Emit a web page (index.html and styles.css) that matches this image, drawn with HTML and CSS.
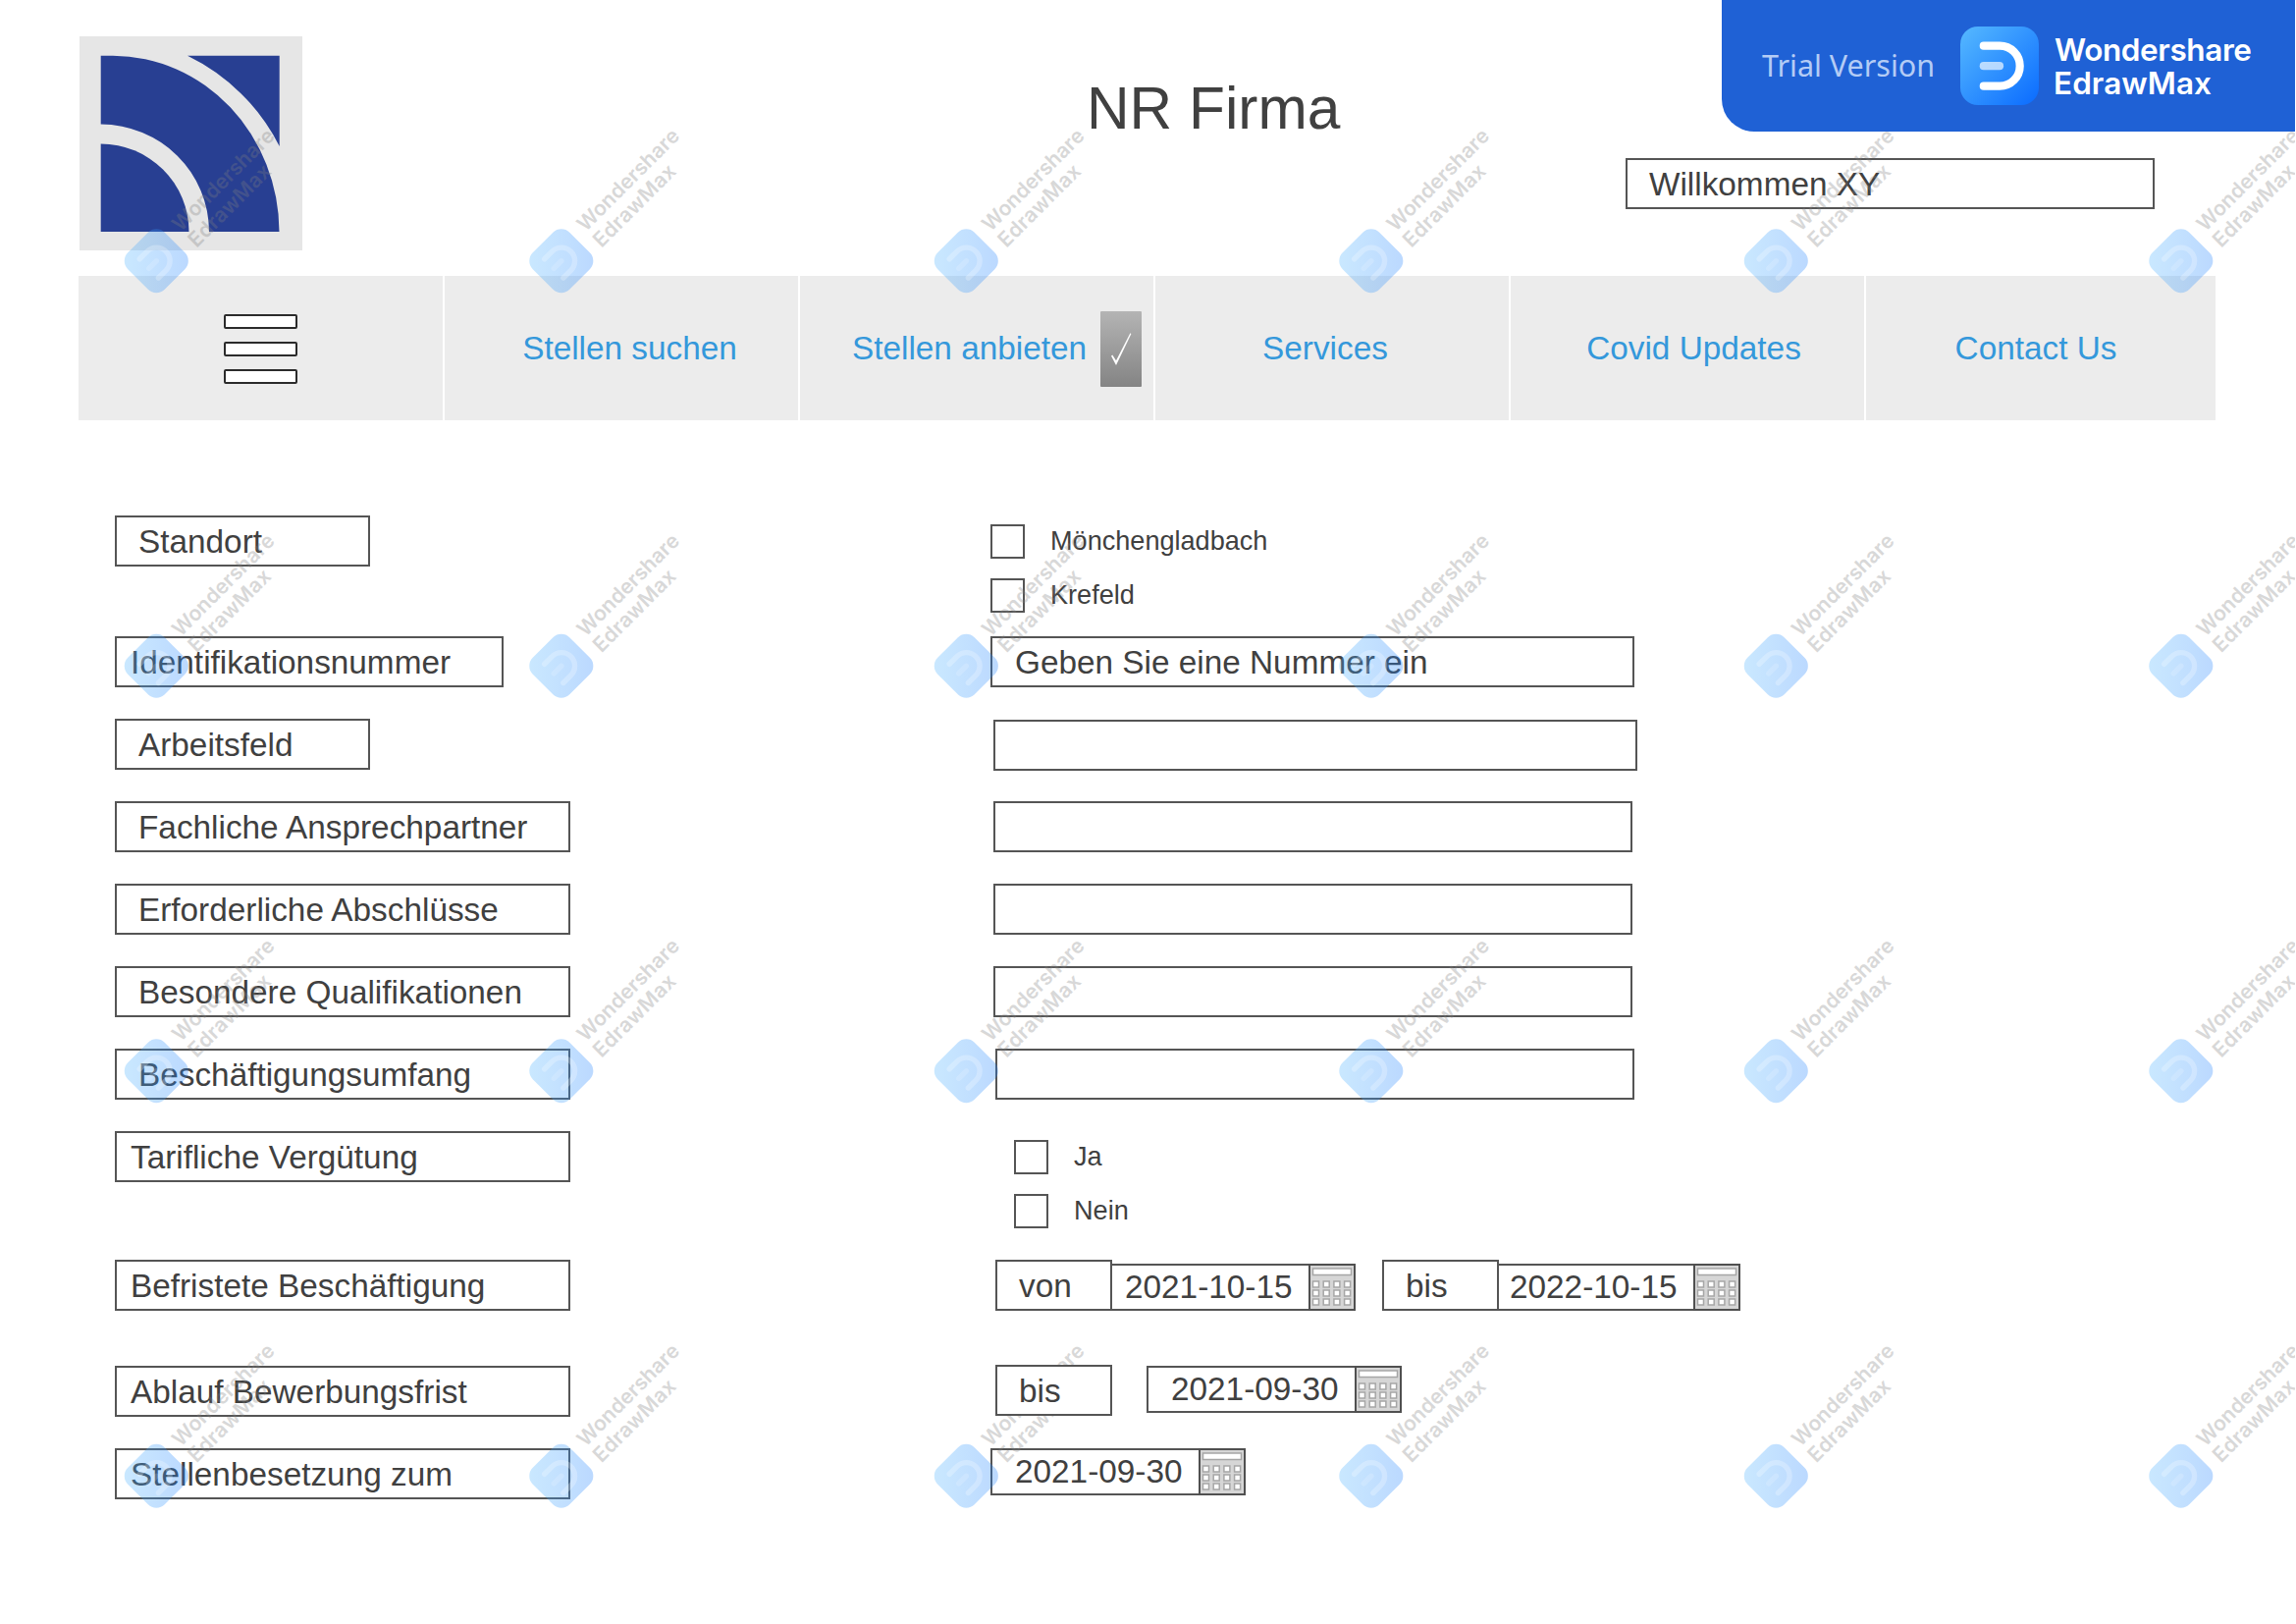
FILE: index.html
```
<!DOCTYPE html>
<html lang="de">
<head>
<meta charset="utf-8">
<title>NR Firma</title>
<link rel="stylesheet" href="styles.css">
</head>
<body>
<header class="header">
  <svg class="logo" viewBox="0 0 227 218">
    <rect width="227" height="218" fill="#e6e6e6"/>
    <g fill="#283f92">
      <path d="M21.7 199V109.5A90 89.5 0 0 1 111.5 199Z"/>
      <path d="M21.7 89.5V19.7H34A170 180 0 0 1 203.500 199H132A110.500 109.500 0 0 0 21.700 89.500Z"/>
      <path d="M110 19.700H203.700V112A205 205 0 0 0 110 19.700Z"/>
    </g>
  </svg>
  <h1 class="title">NR Firma</h1>
  <div class="box welcome">Willkommen XY</div>
</header>

<nav class="nav">
  <div class="nav-item menu"><i></i><i></i><i></i></div>
  <a class="nav-item">Stellen suchen</a>
  <a class="nav-item offer">Stellen anbieten
    <svg class="tick" viewBox="0 0 42 77"><defs><linearGradient id="tg" x2="0" y2="1"><stop stop-color="#b4b4b4"/><stop offset="1" stop-color="#848484"/></linearGradient></defs><rect width="42" height="77" rx="1" fill="url(#tg)"/><path d="M11 45.500L12.300 44.500L16 50.300L30.400 22.300L31.400 23L16 55Z" fill="#fff"/></svg>
  </a>
  <a class="nav-item services">Services</a>
  <a class="nav-item covid">Covid Updates</a>
  <a class="nav-item contact">Contact Us</a>
</nav>

<svg class="defs" width="0" height="0">
  <defs>
    <symbol id="cal" viewBox="0 0 48 48">
      <rect x="1" y="1" width="46" height="46" fill="#d6d6d6" stroke="#505050" stroke-width="2"/>
      <g fill="#fff" stroke="#a6a6a6" stroke-width="1.500">
        <rect x="4.500" y="5" width="39" height="6.500"/>
        <g id="keys"><rect x="4.500" y="18" width="6" height="6"/><rect x="15.200" y="18" width="6" height="6"/><rect x="25.900" y="18" width="6" height="6"/><rect x="36.600" y="18" width="6" height="6"/></g>
        <use href="#keys" y="9"/><use href="#keys" y="18"/>
      </g>
    </symbol>
    <linearGradient id="brand" x1="0" y1="0" x2="1" y2="1"><stop stop-color="#56b9ff"/><stop offset="1" stop-color="#0a6bff"/></linearGradient>
    <linearGradient id="pale" x1="0" y1="0" x2="1" y2="1"><stop stop-color="#50b6ff"/><stop offset="1" stop-color="#1a7cff"/></linearGradient>
  </defs>
</svg>

<main class="form">
  <div class="row"><div class="box label short">Standort</div>
    <div class="checks"><label><i class="check"></i>Mönchengladbach</label><label><i class="check"></i>Krefeld</label></div></div>
  <div class="row"><div class="box label mid tight">Identifikationsnummer</div><div class="box field number">Geben Sie eine Nummer ein</div></div>
  <div class="row"><div class="box label short">Arbeitsfeld</div><div class="box field work"></div></div>
  <div class="row"><div class="box label">Fachliche Ansprechpartner</div><div class="box field"></div></div>
  <div class="row"><div class="box label">Erforderliche Abschlüsse</div><div class="box field"></div></div>
  <div class="row"><div class="box label">Besondere Qualifikationen</div><div class="box field"></div></div>
  <div class="row"><div class="box label">Beschäftigungsumfang</div><div class="box field scope"></div></div>
  <div class="row"><div class="box label tight">Tarifliche Vergütung</div>
    <div class="checks pay"><label><i class="check"></i>Ja</label><label><i class="check"></i>Nein</label></div></div>
  <div class="row"><div class="box label tight">Befristete Beschäftigung</div>
    <div class="period">
      <div class="box word">von</div><div class="box date joined from">2021-10-15<svg class="cal"><use href="#cal"/></svg></div>
      <div class="box word second">bis</div><div class="box date joined to">2022-10-15<svg class="cal"><use href="#cal"/></svg></div>
    </div></div>
  <div class="row"><div class="box label tight">Ablauf Bewerbungsfrist</div>
    <div class="period deadline"><div class="box word">bis</div><div class="box date end">2021-09-30<svg class="cal"><use href="#cal"/></svg></div></div></div>
  <div class="row"><div class="box label tight">Stellenbesetzung zum</div>
    <div class="period start"><div class="box date">2021-09-30<svg class="cal"><use href="#cal"/></svg></div></div></div>
</main>

<svg class="watermarks" viewBox="0 0 2338 1654">
  <defs>
    <g id="mark" transform="rotate(-45)">
      <g transform="translate(-26.500 -26.500) scale(.6625)">
        <rect width="80" height="80" rx="18" fill="url(#pale)" opacity=".3"/>
        <path d="M23.800 19.700H40.200a20.500 20.500 0 0 1 0 41H23.800" fill="none" stroke="#fff" stroke-width="8.200" stroke-linecap="round" opacity=".25"/>
        <path d="M23.800 40.200H40" stroke="#fff" stroke-width="8.200" stroke-linecap="round" opacity=".16"/>
      </g>
      <g class="mark-text"><text x="38" y="-3" textLength="137">Wondershare</text><text x="38" y="20" textLength="109">EdrawMax</text></g>
    </g>
    <g id="line">
      <use href="#mark" x="159.300"/><use href="#mark" x="571.800"/><use href="#mark" x="984.300"/><use href="#mark" x="1396.800"/><use href="#mark" x="1809.300"/><use href="#mark" x="2221.800"/>
    </g>
  </defs>
  <use href="#line" y="265.700"/><use href="#line" y="678.200"/><use href="#line" y="1090.700"/><use href="#line" y="1503.200"/>
</svg>

<aside class="trial">
  <span class="trial-text">Trial Version</span>
  <svg class="trial-icon" viewBox="0 0 80 80">
    <rect width="80" height="80" rx="18" fill="url(#brand)"/>
    <path d="M23.800 19.700H40.200a20.500 20.500 0 0 1 0 41H23.800" fill="none" stroke="#fff" stroke-width="8.200" stroke-linecap="round"/>
    <path d="M23.800 40.200H40" stroke="#fff" stroke-width="8.200" stroke-linecap="round" opacity=".65"/>
  </svg>
  <svg class="trial-brand" viewBox="0 0 210 80"><text x="0" y="35.400" textLength="201">Wondershare</text><text x="-1" y="68.800" textLength="161">EdrawMax</text></svg>
</aside>
</body>
</html>
```

FILE: styles.css
```
* { box-sizing: border-box; }
body {
  margin: 0;
  width: 2339px;
  height: 1654px;
  position: relative;
  overflow: hidden;
  background: #fff;
  color: #404040;
  font: 33.33px/1.117 "Liberation Sans", Arial, sans-serif;
  white-space: nowrap;
}
.box {
  height: 52px;
  padding-top: 1px;
  border: 2px solid #555;
  background: #fff;
  display: flex;
  align-items: center;
  flex: none;
}
.header { display: flex; height: 281px; padding-left: 81px; align-items: flex-start; }
.logo { width: 227px; height: 218px; margin-top: 37px; flex: none; }
.title { margin: 76px 0 0 799px; width: 549px; font-size: 60.4px; font-weight: 400; line-height: 68px; flex: none; }
.welcome { width: 539px; margin-top: 161px; padding-left: 22px; }

.nav {
  display: grid;
  grid-template-columns: 371px 360px 360px 360px 360px 356px;
  column-gap: 2px;
  height: 147px;
  width: 2177px;
  margin-left: 80px;
}
.nav-item { background: #ececec; color: #3498db; display: flex; align-items: center; justify-content: center; padding: 1px 0 0 17px; }
.menu { flex-direction: column; gap: 13px; padding: 1px 0 0; }
.menu i { width: 75px; height: 15px; background: #fff; border: 2px solid #2b2b2b; border-radius: 2px; }
.offer { justify-content: flex-start; padding-left: 53px; }
.tick { width: 42px; height: 77px; margin-left: 14px; }
.services { padding: 1px 14px 0 0; }
.covid { padding: 1px 0 0 13px; }
.contact { padding: 1px 10px 0 0; }

.defs { position: absolute; }
.form {
  display: grid;
  grid-template-rows: 123px repeat(6, 84px) 131px 108px 84px 52px;
  padding: 97px 0 0 117px;
}
.row { display: grid; grid-template-columns: 892px 1fr; align-items: start; }
.label { width: 464px; padding-left: 22px; }
.label.short { width: 260px; }
.label.mid { width: 396px; }
.label.tight { padding-left: 14px; }
.field { width: 651px; margin-left: 3px; }
.number { width: 656px; margin-left: 0; padding-left: 23px; }
.work { width: 656px; margin-top: 1px; }
.scope { margin-left: 5px; }
.checks { display: grid; row-gap: 20px; padding-top: 9px; font-size: 27.1px; }
.checks label { display: flex; align-items: center; height: 35px; gap: 26px; }
.check { width: 35px; height: 35px; border: 2px solid #555; background: #fff; }
.pay { padding-left: 24px; }
.period { display: flex; align-items: flex-end; padding-left: 5px; height: 52px; }
.word { width: 119px; padding-left: 22px; z-index: 1; }
.second { margin-left: 27px; }
.date { height: 48px; width: 260px; padding-top: 0; padding-left: 23px; justify-content: space-between; }
.cal { width: 48px; height: 48px; margin-right: -2px; flex: none; }
.joined { margin-left: -2px; }
.from { width: 250px; padding-left: 13px; }
.to { width: 248px; padding-left: 11px; }
.deadline { align-items: flex-start; margin-top: -1px; }
.end { margin: 1px 0 0 35px; }
.start { align-items: flex-start; padding-left: 0; }

.watermarks { position: absolute; left: 0; top: 0; width: 2338px; height: 1654px; overflow: hidden; }
.mark-text { font: 600 21px Inter, sans-serif; fill: #808080; opacity: .3; }

.trial {
  position: absolute;
  top: 0;
  right: 1px;
  width: 584px;
  height: 134px;
  padding-left: 41px;
  border-bottom-left-radius: 33px;
  background: #1f61d5;
  display: flex;
  align-items: center;
}
.trial-text { width: 202px; padding-bottom: 3px; font: 30.5px "Noto Sans", sans-serif; color: #b4ccf5; }
.trial-icon { width: 80px; height: 80px; }
.trial-brand { width: 210px; height: 80px; margin-left: 16px; fill: #fff; font: 600 31.5px Inter, sans-serif; overflow: visible; }
```
